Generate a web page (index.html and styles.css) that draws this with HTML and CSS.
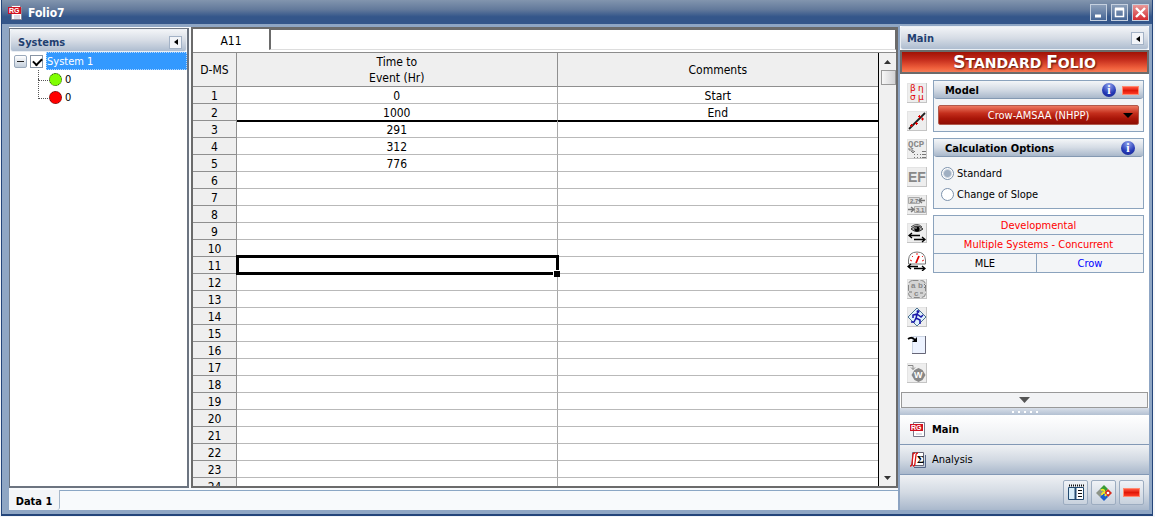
FILE: index.html
```html
<!DOCTYPE html>
<html lang="en">

<head>
    <meta charset="UTF-8">
    <meta name="viewport" content="width=device-width, initial-scale=1.0">
    <title>Folio7</title>
    <link rel="stylesheet" href="styles.css">
</head>

<body>
    <div class="window">
        <header class="titlebar">
            <svg class="app-icon" width="16" height="16" viewBox="0 0 16 16">
                <path d="M3.500.500h8l2 2v12h-10z" fill="#fff" stroke="#889" />
                <rect x="0" y="2" width="13" height="7" fill="#d01020" />
                <text x="1" y="8" class="rg-text">RG</text>
                <path d="M6 11h6M6 13h6" stroke="#bbc" />
            </svg>
            <h1>Folio7</h1>
            <div class="window-buttons">
                <button class="win-btn" aria-label="Minimize">
                    <svg width="15" height="15"><path d="M4 11h6" stroke="#fff" stroke-width="3" /></svg>
                </button>
                <button class="win-btn" aria-label="Maximize">
                    <svg width="15" height="15"><path d="M3.500 4h8v7.500h-8z" fill="none" stroke="#fff" stroke-width="1.500" /><path d="M3 4h9" stroke="#fff" stroke-width="3" /></svg>
                </button>
                <button class="win-btn close-btn" aria-label="Close">
                    <svg width="15" height="15"><path d="M3 3l9 9M12 3l-9 9" stroke="#fff" stroke-width="2.4" /></svg>
                </button>
            </div>
        </header>

        <div class="content">
            <main class="workspace">
                <div class="panes">
                    <!-- Systems tree -->
                    <aside class="systems">
                        <div class="panel-header">
                            <h2>Systems</h2>
                            <button class="collapse-btn" aria-label="Collapse systems"><svg width="4" height="6"><path d="M4 0v6L0 3z" /></svg></button>
                        </div>
                        <div class="tree-row">
                            <button class="expander" aria-label="Collapse System 1"></button>
                            <input type="checkbox" id="system1" class="tree-check" checked>
                            <label for="system1" class="tree-label">System 1</label>
                        </div>
                        <ul class="tree-children">
                            <li><span class="dot green"></span>0</li>
                            <li><span class="dot red"></span>0</li>
                        </ul>
                    </aside>

                    <!-- Data sheet -->
                    <section class="sheet">
                        <div class="formula-bar">
                            <input type="text" class="cell-name" aria-label="Cell" value="A11">
                            <input type="text" class="cell-value" aria-label="Cell value">
                        </div>
                        <div class="sheet-body">
                            <div class="table-wrap">
                                <table>
                                    <thead>
                                        <tr><th class="row-head">D-MS</th><th>Time to<br>Event (Hr)</th><th>Comments</th></tr>
                                    </thead>
                                    <tbody>
                                        <tr><th>1</th><td>0</td><td>Start</td></tr>
                                        <tr class="end-row"><th>2</th><td>1000</td><td>End</td></tr>
                                        <tr><th>3</th><td>291</td><td></td></tr>
                                        <tr><th>4</th><td>312</td><td></td></tr>
                                        <tr><th>5</th><td>776</td><td></td></tr>
                                        <tr><th>6</th><td></td><td></td></tr>
                                        <tr><th>7</th><td></td><td></td></tr>
                                        <tr><th>8</th><td></td><td></td></tr>
                                        <tr><th>9</th><td></td><td></td></tr>
                                        <tr><th>10</th><td></td><td></td></tr>
                                        <tr><th>11</th><td class="selected"></td><td></td></tr>
                                        <tr><th>12</th><td></td><td></td></tr>
                                        <tr><th>13</th><td></td><td></td></tr>
                                        <tr><th>14</th><td></td><td></td></tr>
                                        <tr><th>15</th><td></td><td></td></tr>
                                        <tr><th>16</th><td></td><td></td></tr>
                                        <tr><th>17</th><td></td><td></td></tr>
                                        <tr><th>18</th><td></td><td></td></tr>
                                        <tr><th>19</th><td></td><td></td></tr>
                                        <tr><th>20</th><td></td><td></td></tr>
                                        <tr><th>21</th><td></td><td></td></tr>
                                        <tr><th>22</th><td></td><td></td></tr>
                                        <tr><th>23</th><td></td><td></td></tr>
                                        <tr><th>24</th><td></td><td></td></tr>
                                    </tbody>
                                </table>
                            </div>
                            <div class="scrollbar">
                                <button class="scroll-btn" aria-label="Scroll up"><svg width="7" height="4"><path d="M0 4h7L3.500 0z" fill="#333" /></svg></button>
                                <div class="scroll-track"><div class="scroll-thumb"></div></div>
                                <button class="scroll-btn" aria-label="Scroll down"><svg width="7" height="4"><path d="M0 0h7L3.500 4z" fill="#333" /></svg></button>
                            </div>
                        </div>
                    </section>
                </div>
                <nav class="sheet-tabs">
                    <button class="sheet-tab">Data 1</button>
                </nav>
            </main>

            <!-- Control panel -->
            <aside class="control-panel">
                <div class="panel-header">
                    <h2>Main</h2>
                    <button class="collapse-btn" aria-label="Collapse main"><svg width="4" height="6"><path d="M4 0v6L0 3z" /></svg></button>
                </div>
                <div class="banner"><span>Standard</span> <span>Folio</span></div>

                <div class="panel-body">
                    <div class="toolbar">
                        <button class="tool" aria-label="Parameters">
                            <svg viewBox="0 0 20 20" class="greek"><text x="3" y="8">β</text><text x="11" y="8">η</text><text x="3" y="17">σ</text><text x="11" y="17">μ</text></svg>
                        </button>
                        <button class="tool" aria-label="Plot">
                            <svg viewBox="0 0 20 20"><path d="M2 18L18 2" stroke="#222" stroke-width="1.800" /><path d="M3 14.500h3M4.500 13v3M8 12.500h3M9.500 11v3M11 5.500h3M12.500 4v3M14 8h3M15.500 6.500v3" stroke="#e00000" /></svg>
                        </button>
                        <button class="tool" aria-label="QCP">
                            <svg viewBox="0 0 20 20"><text x="1" y="8" class="qcp">QCP</text><path d="M2 9v2h4v3M4 12l2 2 2-2" fill="none" stroke="#777" /><path d="M7 15.500h1M7 18.500h1M10 15.500h1M10 18.500h1M13 15.500h1M13 18.500h1M15 12.500h4M15 15.500h4M15 18.500h4" stroke="#777" /></svg>
                        </button>
                        <button class="tool" aria-label="Event report">
                            <svg viewBox="0 0 20 20"><text x="1" y="15" class="ef">EF</text></svg>
                        </button>
                        <button class="tool" aria-label="Round values">
                            <svg viewBox="0 0 20 20"><path d="M1.500 2.500h11v6h-11zM7.500 11.500h11v6h-11z" fill="#ddd" stroke="#aaa" /><text x="3" y="8" class="num">2.7</text><text x="9" y="17" class="num">3.1</text><path d="M13 5.500h5M15 3l-3 2.500 3 2.500M1 14.500h6M4 12l3 2.500L4 17" fill="none" stroke="#777" stroke-width="1.300" /></svg>
                        </button>
                        <button class="tool" aria-label="Show or hide">
                            <svg viewBox="0 0 20 20"><path d="M4 6Q10 0 16 6Q10 11 4 6z" fill="#aaa" stroke="#333" /><path d="M4 4Q10-1 15 4" fill="none" stroke="#444" /><circle cx="10" cy="6" r="2.600" /><circle cx="9" cy="5" r=".8" fill="#ddd" /><path d="M2 12.500h11M5 10l-3 2.500 3 2.500M7 16.500h11M15 14l3 2.500-3 2.500" fill="none" stroke="#000" stroke-width="1.300" /></svg>
                        </button>
                        <button class="tool plain" aria-label="Gauge">
                            <svg viewBox="0 0 20 20"><path d="M1.500 13V9Q2 1 10 1Q18 1 18.500 9v4z" fill="#fff" stroke="#777" /><path d="M3 9l2 1M5 5l1 1M10 2v2M16 5l-1 1M17 9l-2 1" stroke="#e22" /><path d="M9 12l3-7" stroke="#e00000" stroke-width="1.800" /><path d="M1 15.500h10M4 13l-3 2.500 3 2.500M7 17.500h11M15 15l3 2.500-3 2.500" fill="none" stroke="#000" stroke-width="1.300" /></svg>
                        </button>
                        <button class="tool" aria-label="Alter parameters">
                            <svg viewBox="0 0 20 20"><rect x="1.500" y="1.500" width="17" height="17" rx="4" fill="#d4d4d4" stroke="#888" stroke-dasharray="6 2" /><text x="4" y="9" class="abc">a</text><text x="11" y="9" class="abc">b</text><text x="7" y="17" class="abc">c</text><path d="M17 5l2 2-2 2M2 13h3M13 14h3" fill="none" stroke="#777" /></svg>
                        </button>
                        <button class="tool" aria-label="Run">
                            <svg viewBox="0 0 20 20"><path d="M10 1l9 9-9 9-9-9z" fill="#dff1fb" stroke="#4e7292" /><circle cx="11" cy="4.500" r="1.500" fill="#1717a8" /><path d="M10.500 6L9 11l4 2v4M9 11l-2 4H4M10 7L6 8v3M10 7l4 3 2-2" fill="none" stroke="#1717a8" stroke-width="1.500" /></svg>
                        </button>
                        <button class="tool plain" aria-label="Transfer">
                            <svg viewBox="0 0 20 20"><path d="M5.500 1.500h13v17h-13z" fill="#edf3ff" stroke="#ccd5e3" /><path d="M18.500 1v17.500H5" fill="none" stroke="#667" /><path d="M1 4Q5 1 8 5" fill="none" stroke="#000" stroke-width="1.800" /><path d="M5 7h5V2z" /></svg>
                        </button>
                        <button class="tool" aria-label="Transfer to Weibull">
                            <svg viewBox="0 0 20 20"><path d="M1 2.500h5v4M4 4.500l2 2 2-2" fill="none" stroke="#888" /><path d="M11.500 5l4 2 3 5-3 5-4 2-4-2-3-5 3-5z" fill="#888" /><text x="7" y="15" class="wtext">W</text></svg>
                        </button>
                    </div>

                    <div class="settings">
                        <section class="box">
                            <div class="box-header">
                                <h3>Model</h3>
                                <button class="info" aria-label="Model info">i</button>
                                <button class="red-bar" aria-label="Model status"></button>
                            </div>
                            <div class="model-body">
                                <button class="model-select"><span>Crow-AMSAA (NHPP)</span><svg width="10" height="5"><path d="M0 0h10L5 5z" /></svg></button>
                            </div>
                        </section>

                        <section class="box">
                            <div class="box-header">
                                <h3>Calculation Options</h3>
                                <button class="info" aria-label="Calculation options info">i</button>
                            </div>
                            <div class="options">
                                <label><input type="radio" name="calc" checked>Standard</label>
                                <label><input type="radio" name="calc">Change of Slope</label>
                            </div>
                        </section>

                        <div class="status">
                            <div class="status-cell wide warn">Developmental</div>
                            <div class="status-cell wide warn">Multiple Systems - Concurrent</div>
                            <div class="status-cell">MLE</div>
                            <div class="status-cell link">Crow</div>
                        </div>
                    </div>
                </div>

                <button class="more-btn" aria-label="More"><svg width="11" height="6"><path d="M0 0h11L5.500 6z" fill="#555" /></svg></button>
                <div class="splitter"><i></i><i></i><i></i><i></i><i></i></div>
                <button class="page-btn active">
                    <svg width="16" height="16" viewBox="0 0 16 16">
                        <path d="M3.500.500h11v14h-11z" fill="#fff" stroke="#778" />
                        <rect x="0" y="2" width="13" height="7" fill="#d01020" />
                        <text x="1" y="8" class="rg-text">RG</text>
                        <path d="M6 12h6" stroke="#bbc" />
                    </svg>
                    Main
                </button>
                <button class="page-btn">
                    <svg width="16" height="16" viewBox="0 0 16 16">
                        <path d="M2.500.500h11v13h-11z" fill="#fff" stroke="#667" />
                        <path d="M15.500 3v12.500H4" fill="none" stroke="#568" />
                        <path d="M0 14q2 0 2-3l1-8q0-2 2-2M3 14q2 0 2-3l1-8q0-2 2-2" fill="none" stroke="#d11" stroke-width="1.300" />
                        <text x="7" y="11" class="sigma">Σ</text>
                    </svg>
                    Analysis
                </button>
                <footer class="bottom-bar">
                    <button class="bottom-btn" aria-label="Notes">
                        <svg width="18" height="18" viewBox="0 0 18 18"><path d="M1.500 3.500h15v12h-15z" fill="#fff" stroke="#234a70" /><path d="M2 4h6v11H2z" fill="#d8edf9" /><path d="M8.500 3v13" stroke="#234a70" stroke-width="2" /><path d="M2 1.500h15" stroke="#111" stroke-width="2" stroke-dasharray="1 1" /><path d="M11 6.500h4M11 9.500h4M11 12.500h4" stroke="#111" /></svg>
                    </button>
                    <button class="bottom-btn" aria-label="Components">
                        <svg width="18" height="18" viewBox="0 0 18 18"><path d="M9 1l4 4-4 4-4-4z" fill="#3a9c35" /><path d="M13 5l4 4-4 4-4-4z" fill="#d52b1e" /><path d="M5 5l4 4-4 4-4-4z" fill="#8d9488" /><path d="M9 9l4 4-4 4-4-4z" fill="#1b5fc9" /><path d="M6 6q4-1 3 2M7 11q0-3 3-2M10 12l1-2" fill="none" stroke="#f2e829" stroke-width="1.800" /><circle cx="13" cy="9" r="1.300" fill="#fff" /></svg>
                    </button>
                    <button class="bottom-btn" aria-label="Status"><span class="red-bar"></span></button>
                </footer>
            </aside>
        </div>
    </div>
</body>

</html>
```
FILE: styles.css
```css
* {
    box-sizing: border-box;
}

body {
    margin: 0;
    padding: 0 2px 1px 1px;
    height: 100vh;
    background-color: #f4f6f9;
    font-family: "DejaVu Sans Condensed", "Noto Sans", sans-serif;
    font-size: 11px;
    color: #000;
}

button,
input {
    font: inherit;
    color: inherit;
    margin: 0;
    padding: 0;
    border: none;
    background: none;
}

svg {
    display: block;
    flex: none;
}

h1,
h2,
h3 {
    margin: 0;
    font-size: 11px;
}

.window {
    height: 100%;
    display: flex;
    flex-direction: column;
    border: 1px solid #24457a;
    border-top: none;
    border-bottom-width: 2px;
    background-color: #8fa6c4;
}

/* Title bar */
.titlebar {
    flex: none;
    height: 24px;
    display: flex;
    align-items: center;
    gap: 4px;
    padding: 1px 3px 0 6px;
    background: linear-gradient(#8295ae, #62799b 40%, #34568a 70%, #34568a);
}

.titlebar h1 {
    flex: 1;
    font-size: 12px;
    color: #fff;
}

.rg-text {
    font: bold 7px "Liberation Sans", sans-serif;
    fill: #fff;
}

.window-buttons {
    display: flex;
    gap: 4px;
}

.win-btn {
    width: 17px;
    height: 17px;
    border: 1px solid #c5d0df;
    background: linear-gradient(#8c9fb9, #466696);
}

.close-btn {
    background: linear-gradient(#e89a9a, #d52b30);
}

/* Window content */
.content {
    flex: 1;
    min-height: 0;
    display: flex;
    padding: 3px 3px 4px 7px;
}

.workspace {
    flex: 1;
    min-width: 0;
    display: flex;
    flex-direction: column;
    background-color: #f8fafc;
}

.panes {
    flex: 1;
    min-height: 0;
    display: flex;
    gap: 2px;
}

.systems {
    flex: none;
    width: 180px;
    margin-top: 1px;
    border: 1px solid #6c7480;
    border-bottom-width: 2px;
    border-right: 2px solid #6c7480;
    background-color: #fff;
}

.panel-header {
    height: 23px;
    display: flex;
    align-items: center;
    justify-content: space-between;
    padding: 3px 4px 0 7px;
    border: 1px solid #e9eef4;
    border-radius: 3px;
    background: linear-gradient(#f2f4f7, #d6dce5 50%, #aebdd0);
}

.panel-header h2 {
    color: #1f3f70;
}

.collapse-btn {
    width: 13px;
    height: 13px;
    display: flex;
    align-items: center;
    justify-content: center;
    border: 1px solid #a3b2c6;
    background-color: #f2f4f8;
}

/* Tree */
.tree-row {
    height: 18px;
    display: flex;
    align-items: center;
    gap: 3px;
    padding-left: 4px;
}

.expander {
    position: relative;
    width: 13px;
    height: 13px;
    border: 1px solid #9aa9bb;
    border-radius: 2px;
    background: linear-gradient(#fff, #c3cedb);
}

.expander::after {
    content: "";
    position: absolute;
    inset: 5px 2px;
    background-color: #222;
}

.tree-check {
    appearance: none;
    position: relative;
    flex: none;
    width: 13px;
    height: 13px;
    border: 1px solid #8794a5;
    background-color: #fff;
}

.tree-check:checked::after {
    content: "";
    position: absolute;
    left: 2px;
    top: 2px;
    width: 7px;
    height: 4px;
    border: solid #000;
    border-width: 0 0 2px 2px;
    transform: rotate(-45deg);
}

.tree-label {
    flex: 1;
    height: 18px;
    line-height: 17px;
    border: 1px dotted #b5d8ff;
    background-color: #3399ff;
    color: #fff;
}

.tree-children {
    list-style: none;
    margin: 0;
    padding: 0 0 0 28px;
}

.tree-children li {
    position: relative;
    height: 18px;
    display: flex;
    align-items: center;
    gap: 3px;
    padding-left: 11px;
}

.tree-children li::before {
    content: "";
    position: absolute;
    left: 0;
    top: 0;
    width: 11px;
    height: 10px;
    border: dotted #555;
    border-width: 0 0 1px 1px;
}

.tree-children li + li::before {
    top: -9px;
    height: 19px;
}

.dot {
    width: 13px;
    height: 13px;
    border: 1px dotted #222;
    border-radius: 50%;
}

.green {
    background-color: #80ff00;
}

.red {
    background-color: #ff0000;
}

/* Sheet */
.sheet {
    flex: 1;
    min-width: 0;
    display: flex;
    flex-direction: column;
    border: 2px solid #6b6b6b;
    background-color: #fff;
    font-size: 12px;
}

.formula-bar {
    flex: none;
    height: 24px;
    display: flex;
    border-bottom: 1px solid #8c8c8c;
}

.cell-name {
    width: 76px;
    text-align: center;
}

.cell-value {
    flex: 1;
    min-width: 0;
    height: 21px;
    border: 1px solid #6b6b6b;
    border-left-width: 2px;
    border-bottom-color: #ddd;
}

.sheet-body {
    flex: 1;
    min-height: 0;
    display: flex;
}

.table-wrap {
    flex: 1;
    overflow: hidden;
    border-right: 1px solid #000;
}

table {
    width: 100%;
    table-layout: fixed;
    border-collapse: separate;
    border-spacing: 0;
    text-align: center;
    line-height: 14px;
}

th,
td {
    height: 17px;
    padding: 2px 0 0;
    font-weight: normal;
    border-right: 1px solid #a8a8a8;
    border-bottom: 1px solid #b9b9b9;
}

td:last-child,
th:last-child {
    border-right: none;
}

th {
    background-color: #efefef;
    border-color: #8f8f8f;
}

thead th {
    height: 34px;
    padding-top: 1px;
    line-height: 16px;
}

.row-head {
    width: 44px;
}

.end-row td {
    border-bottom-color: #000;
    box-shadow: 0 1px #000;
}

.selected {
    position: relative;
}

.selected::before {
    content: "";
    position: absolute;
    inset: -2px -2px -2px -1px;
    border: 3px solid #000;
}

.selected::after {
    content: "";
    position: absolute;
    right: -3px;
    bottom: -4px;
    width: 6px;
    height: 6px;
    border: solid #fff;
    border-width: 1px 0 0 1px;
    background-color: #000;
}

.scrollbar {
    flex: none;
    width: 17px;
    display: flex;
    flex-direction: column;
    background-color: #f0f0f0;
}

.scroll-btn {
    height: 17px;
    display: flex;
    align-items: center;
    justify-content: center;
}

.scroll-track {
    flex: 1;
}

.scroll-thumb {
    height: 15px;
    margin-left: 2px;
    border: 1px solid #999;
    background: linear-gradient(90deg, #f7f7f7, #d2d2d4);
}

.sheet-tabs {
    flex: none;
    height: 22px;
    display: flex;
    padding-top: 2px;
}

.sheet-tabs::after {
    content: "";
    flex: 1;
    border-top: 1px solid #8ba7c5;
}

.sheet-tab {
    width: 51px;
    padding-top: 3px;
    border-right: 1px solid #a6b7ca;
    border-radius: 0 0 3px 0;
    background-color: #f3f5f8;
    font-weight: bold;
}

/* Control panel */
.control-panel {
    flex: none;
    width: 251px;
    display: flex;
    flex-direction: column;
    margin-top: -1px;
    border-left: 2px solid #8ca3c2;
    background-color: #fff;
}

.control-panel .panel-header {
    height: 24px;
    padding: 1px 4px 0 6px;
}

.banner {
    height: 24px;
    line-height: 20px;
    border: 2px solid #6b6b6b;
    background: linear-gradient(#a01205, #c0281a 35%, #f0603c 80%, #f57a55);
    color: #fff;
    font-family: "DejaVu Sans", sans-serif;
    font-size: 14px;
    font-weight: bold;
    text-align: center;
    text-transform: uppercase;
    text-shadow: 1px 1px 2px #501008;
}

.banner span {
    display: inline-block;
}

.banner span::first-letter {
    font-size: 17px;
}

.panel-body {
    flex: 1;
    min-height: 0;
    display: flex;
    gap: 6px;
    padding: 6px 5px 0 7px;
}

.toolbar {
    display: flex;
    flex-direction: column;
    gap: 8px;
    padding-top: 3px;
}

.tool {
    width: 20px;
    height: 20px;
    box-shadow: inset -1px -1px #c4c4c4, inset 1px 1px #e4e4e4;
    background-color: #eee;
}

.tool svg {
    width: 20px;
    height: 20px;
}

.plain {
    background: none;
    box-shadow: none;
}

.greek {
    font: 9px "DejaVu Sans", sans-serif;
    fill: #e00000;
}

.qcp {
    font: bold 9px "Liberation Mono", monospace;
    fill: #888;
}

.ef {
    font: bold 14px "Liberation Sans", sans-serif;
    fill: #888;
}

.num {
    font: bold 6px "Liberation Sans", sans-serif;
    fill: #777;
}

.abc {
    font: bold 8px "Liberation Sans", sans-serif;
    fill: #888;
}

.wtext {
    font: bold 9px "Liberation Sans", sans-serif;
    fill: #fff;
}

.sigma {
    font: bold 11px "Liberation Serif", serif;
}

.settings {
    flex: 1;
    min-width: 0;
    display: flex;
    flex-direction: column;
    gap: 6px;
}

.box {
    border: 1px solid #8ba3bd;
    background-color: #f3f5f7;
}

.box-header {
    height: 18px;
    display: flex;
    align-items: center;
    gap: 6px;
    padding: 1px 4px 0 11px;
    border-bottom: 1px solid #8499b2;
    border-radius: 3px;
    background: linear-gradient(#f4f6f8, #d5dce5 50%, #a9b8cb);
}

.box-header h3 {
    flex: 1;
}

.box-header .info:last-child {
    margin-right: 4px;
}

.info {
    width: 14px;
    height: 14px;
    border-radius: 50%;
    background: radial-gradient(circle at 50% 20%, #8ea2ec, #2438b5 60%, #1a2a90);
    color: #fff;
    font: bold 12px/14px "Liberation Serif", serif;
    text-align: center;
}

.red-bar {
    width: 17px;
    height: 9px;
    border: 1px solid #ff8a70;
    background: linear-gradient(#ff5540, #e01808 50%, #ff3a25);
}

.model-body {
    padding: 6px 4px;
}

.model-select {
    width: 100%;
    height: 20px;
    display: flex;
    align-items: center;
    padding: 1px 5px 0;
    border: 1px solid #b05a4c;
    border-radius: 2px;
    background: linear-gradient(#ee7a62, #c42e1c 40%, #a81508 70%, #8e0d04);
    color: #fff;
}

.model-select span {
    flex: 1;
    padding-left: 10px;
}

.options {
    display: flex;
    flex-direction: column;
    gap: 5px;
    padding: 8px 7px 6px;
}

.options label {
    display: flex;
    align-items: center;
    gap: 3px;
    height: 16px;
}

.options input {
    appearance: none;
    width: 13px;
    height: 13px;
    border: 1px solid #7d93ad;
    border-radius: 50%;
    background-color: #fff;
}

.options input:checked {
    background: radial-gradient(circle, #9fafc2 0 3px, #fff 5px);
}

.status {
    display: grid;
    grid-template-columns: 49fr 51fr;
    gap: 1px;
    padding: 1px;
    background-color: #8ba3bd;
}

.status-cell {
    height: 18px;
    line-height: 19px;
    background-color: #f3f5f7;
    text-align: center;
}

.wide {
    grid-column: span 2;
}

.warn {
    color: #ff0000;
}

.link {
    color: #0000ff;
}

.more-btn {
    height: 16px;
    display: flex;
    align-items: center;
    justify-content: center;
    margin: 0 1px;
    border: 1px solid #999;
    background-color: #f2f3f5;
}

.splitter {
    height: 7px;
    display: flex;
    align-items: center;
    justify-content: center;
    gap: 4px;
    background: linear-gradient(#d8dfe9, #b3c0d2);
}

.splitter i {
    width: 2px;
    height: 2px;
    background-color: #fff;
}

.page-btn {
    height: 30px;
    display: flex;
    align-items: center;
    gap: 6px;
    padding-left: 10px;
    border-bottom: 1px solid #8298b5;
    background: linear-gradient(#eff1f4, #d3dae3 50%, #a9b8cc);
}

.active {
    background: linear-gradient(#fff, #e9ecf0);
    font-weight: bold;
}

.bottom-bar {
    height: 35px;
    display: flex;
    align-items: center;
    justify-content: flex-end;
    gap: 3px;
    padding-right: 5px;
    background: linear-gradient(#eff1f4, #d3dae3 50%, #a9b8cc);
}

.bottom-btn {
    width: 25px;
    height: 25px;
    display: flex;
    align-items: center;
    justify-content: center;
    border: 1px solid #9cacc0;
    border-radius: 2px;
    background: linear-gradient(#f0f3f7, #c8d1dd);
}
```
